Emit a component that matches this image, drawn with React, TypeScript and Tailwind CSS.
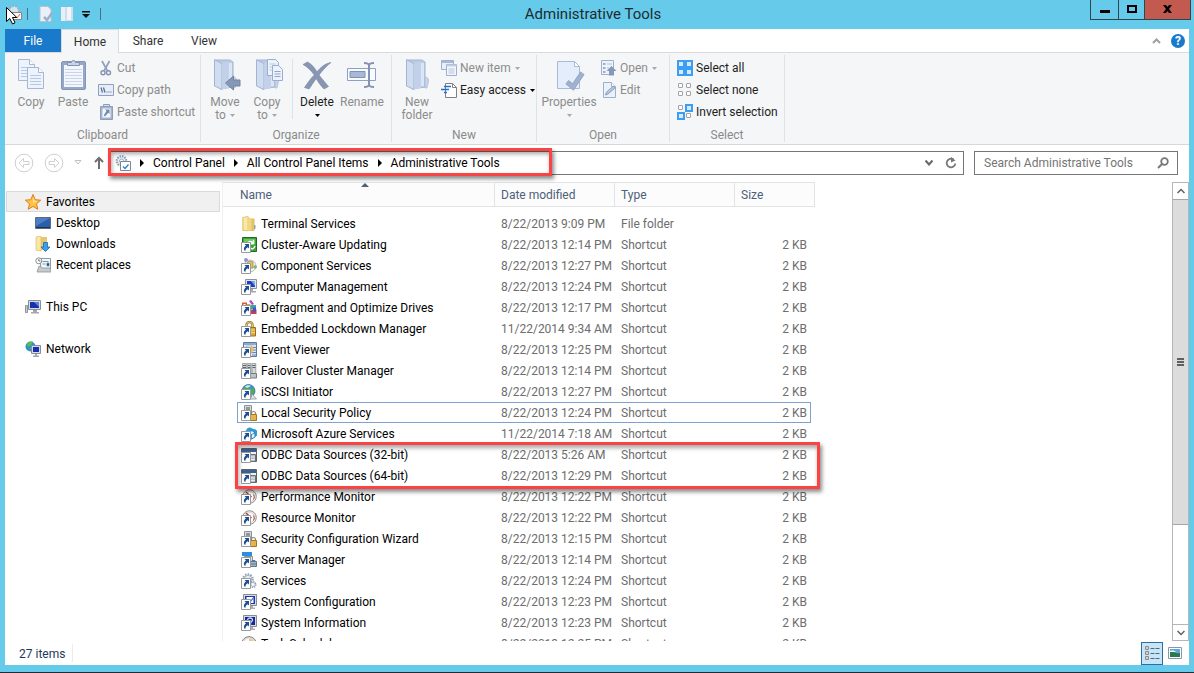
import type { ReactNode } from 'react'
import { clsx } from 'clsx'

type IconKind =
  | 'folder'
  | 'update'
  | 'component'
  | 'computer'
  | 'defrag'
  | 'lock'
  | 'event'
  | 'cluster'
  | 'globe'
  | 'policy'
  | 'azure'
  | 'odbc'
  | 'gauge'
  | 'server'
  | 'gear'
  | 'config'
  | 'info'
  | 'clock'

interface FileItem {
  name: string
  date: string
  icon: IconKind
  type?: string
  size?: string
  focused?: boolean
}

const files: FileItem[] = [
  { name: 'Terminal Services', date: '8/22/2013 9:09 PM', icon: 'folder', type: 'File folder', size: '' },
  { name: 'Cluster-Aware Updating', date: '8/22/2013 12:14 PM', icon: 'update' },
  { name: 'Component Services', date: '8/22/2013 12:27 PM', icon: 'component' },
  { name: 'Computer Management', date: '8/22/2013 12:24 PM', icon: 'computer' },
  { name: 'Defragment and Optimize Drives', date: '8/22/2013 12:17 PM', icon: 'defrag' },
  { name: 'Embedded Lockdown Manager', date: '11/22/2014 9:34 AM', icon: 'lock' },
  { name: 'Event Viewer', date: '8/22/2013 12:25 PM', icon: 'event' },
  { name: 'Failover Cluster Manager', date: '8/22/2013 12:14 PM', icon: 'cluster' },
  { name: 'iSCSI Initiator', date: '8/22/2013 12:27 PM', icon: 'globe' },
  { name: 'Local Security Policy', date: '8/22/2013 12:24 PM', icon: 'policy', focused: true },
  { name: 'Microsoft Azure Services', date: '11/22/2014 7:18 AM', icon: 'azure' },
  { name: 'ODBC Data Sources (32-bit)', date: '8/22/2013 5:26 AM', icon: 'odbc' },
  { name: 'ODBC Data Sources (64-bit)', date: '8/22/2013 12:29 PM', icon: 'odbc' },
  { name: 'Performance Monitor', date: '8/22/2013 12:22 PM', icon: 'gauge' },
  { name: 'Resource Monitor', date: '8/22/2013 12:22 PM', icon: 'gauge' },
  { name: 'Security Configuration Wizard', date: '8/22/2013 12:15 PM', icon: 'policy' },
  { name: 'Server Manager', date: '8/22/2013 12:14 PM', icon: 'server' },
  { name: 'Services', date: '8/22/2013 12:24 PM', icon: 'gear' },
  { name: 'System Configuration', date: '8/22/2013 12:23 PM', icon: 'config' },
  { name: 'System Information', date: '8/22/2013 12:23 PM', icon: 'info' },
  { name: 'Task Scheduler', date: '8/22/2013 12:25 PM', icon: 'clock' },
]

const serverTower = (
  <>
    <path d="M3.5.5h7v12h-7z" fill="#d5dadd" stroke="#8b9499" />
    <path d="M5 3h4M5 5h4" stroke="#4d565c" />
  </>
)

const padlock = (
  <>
    <path d="M10.5 10V8.5a2 2 0 0 1 4 0V10" fill="none" stroke="#8c8577" strokeWidth="1.2" />
    <path d="M9.5 9.5h6v6h-6z" fill="#e5b54a" stroke="#a8761c" />
  </>
)

const gaugeFace = (
  <>
    <circle cx="8.5" cy="7.5" r="6.8" fill="#eceae6" stroke="#8f8f8f" />
    <circle cx="8.5" cy="7.5" r="5" fill="#fff" stroke="#c9c3bb" strokeWidth=".6" />
    <path d="M12.5 5.5a4.5 4.5 0 0 1 0 5" fill="none" stroke="#b4443a" />
    <path d="m5 3 5.500 5" stroke="#b5362e" strokeWidth="1.4" />
  </>
)

const artwork: Record<IconKind, ReactNode> = {
  folder: (
    <>
      <path d="M1.500 1h6l1 1.500h5v12.500h-12z" fill="#e3c264" />
      <path d="M2 1.500 7 0v15l-5-.8z" fill="#f9e8a6" stroke="#d9b755" strokeWidth=".6" />
      <path d="M7 2h3.500v12L7 15z" fill="#f0d784" />
      <path d="M13 9h1.500v4H13z" fill="#86a9b8" />
    </>
  ),
  update: (
    <>
      <path d="M1.500.5h14v14h-14z" fill="#3da43a" stroke="#1c6d22" />
      <path d="M3 2h11v5.500L3 9z" fill="#6dc85e" />
      <path d="M6 7.500C7 4 10 3.500 11.500 5.500M12.500 3v3.500H9M14 9c-1 3-3 3.500-4.500 2" fill="none" stroke="#fff" strokeWidth="1.3" />
    </>
  ),
  component: (
    <>
      <circle cx="9" cy="8" r="6" fill="#f1f2f3" stroke="#b4bac1" />
      <circle cx="5" cy="2" r="2" fill="#8e91d6" />
      <circle cx="14.200" cy="9" r="1.800" fill="#7fb768" />
      <path d="m5 6 3-3 4 1v6H8z" fill="#e5c269" stroke="#a97f28" strokeWidth=".7" />
    </>
  ),
  computer: (
    <>
      <path d="M4.500.5h11v9h-11z" fill="#e4e7ea" stroke="#8a929a" />
      <path d="M6 2h8v6H6z" fill="#1840c9" />
      <path d="m10 2 4 0v5z" fill="#7ea4f0" />
      <path d="M9 10h3v2h3v1.500H8z" fill="#a4abb2" />
      <path d="M1.500 5.500h2v9h-2z" fill="#ccd1d5" stroke="#929a9f" />
    </>
  ),
  defrag: (
    <>
      <path d="M1 2.500h5v5H1z" fill="#e4582c" />
      <path d="M2.500 4h2v2h-2z" fill="#fff" />
      <path d="M6 4h3.500v4H6z" fill="#eda52c" />
      <path d="m8 1 2-1 3 4-2 1z" fill="#b344c7" />
      <path d="M10 5h5v4h-5z" fill="#3aa6a0" />
      <path d="M9 9.500h6.500V14H9z" fill="#c33b5e" />
      <path d="M12 7.500h3v4h-3z" fill="#4257b9" />
    </>
  ),
  lock: (
    <>
      <path d="M5.500 8V4a3 3 0 0 1 6 0v4" fill="none" stroke="#9a7a2b" strokeWidth="2.400" />
      <path d="M5.500 8V4a3 3 0 0 1 6 0v4" fill="none" stroke="#e3c878" />
      <path d="M3.500 6.500h11v8.500h-11z" fill="#dca93a" stroke="#98701a" />
      <path d="M4 9h10M4 11.500h10" stroke="#f3d684" />
    </>
  ),
  event: (
    <>
      <path d="M2.500.5h13v14h-13z" fill="#dbe5f5" stroke="#5d77a3" />
      <path d="M3 1h12v2H3z" fill="#8fa9d3" />
      <path d="M11 5.500h4M11 8h4M11 10.500h4M11 13h4" stroke="#6d86b0" />
      <path d="M5.500 4h5v7h-5z" fill="#fff" stroke="#8094b5" strokeWidth=".6" />
      <path d="m11 3 1.500 3.500L11 11 9.500 6.500z" fill="#f0c336" />
    </>
  ),
  cluster: (
    <>
      <path d="M1.500.5h3.800v11H1.500zM6.200.5H10v11H6.200zM11 .5h3.800v11H11z" fill="#d3d8da" stroke="#8b9396" strokeWidth=".8" />
      <path d="M2 2.500h3M6.800 2.500h2.700M11.500 2.500h3M2 4.500h3M6.800 4.500h2.700M11.500 4.500h3" stroke="#505a5f" strokeWidth=".9" />
      <path d="M8.500 10.500h7v4.500h-7z" fill="#bcc4c8" stroke="#727c81" />
    </>
  ),
  globe: (
    <>
      <circle cx="7.500" cy="7" r="6.500" fill="#3f8fd9" stroke="#27609e" strokeWidth=".7" />
      <path d="M2 5C4 1 8 .8 9 1.500L8 5 4 7zM9 6l4-2c1.500 3 0 6-2 7z" fill="#4eb04a" />
      <path d="M4 2.500C6 1 9 1 10 2L6 4z" fill="#c6ecf7" />
      <path d="m11 10 4.500 5h-6z" fill="#dfe4e7" stroke="#8c969c" strokeWidth=".8" />
    </>
  ),
  policy: (
    <>
      {serverTower}
      {padlock}
    </>
  ),
  azure: (
    <>
      <path d="M5 11a3.500 3.500 0 0 1 0-6.500A4 4 0 0 1 12 3a4 4 0 0 1 1 8z" fill="#2e9ddc" />
      <path d="m7 7 4-2.500L14 7v4l-3.500 2L7 11z" fill="#eaf6fd" stroke="#1b7fc1" />
      <path d="m7 7 3.500 1.500L14 7M10.500 8.500V13" fill="none" stroke="#1b7fc1" strokeWidth=".8" />
    </>
  ),
  odbc: (
    <>
      <path d="M.5 1.500h15v13H.5z" fill="#f0f1f3" stroke="#59636f" />
      <path d="M1 2h14v3H1z" fill="#3c618f" />
      <path d="M9.500 7.500h5v7h-5z" fill="#b8bec4" stroke="#666f78" />
      <path d="M10 10h4M10 12.500h4" stroke="#e9ecee" />
    </>
  ),
  gauge: gaugeFace,
  server: (
    <>
      <path d="M1 0h10v4H1z" fill="#2d8fdc" />
      <path d="M3.500 4.500h8v9h-8z" fill="#dfe4e8" stroke="#8996a1" />
      <path d="M9.500 9.500h6v5h-6z" fill="#9db7c8" stroke="#5b7a90" />
      <path d="M11 9.500v-1h3v1M10 12h5" fill="none" stroke="#5b7a90" />
    </>
  ),
  gear: (
    <>
      <circle cx="7" cy="6" r="4.600" fill="#e5eaee" stroke="#94a3af" strokeWidth="2.400" strokeDasharray="1.500 1.100" />
      <circle cx="7" cy="6" r="3.600" fill="#eaf1f5" stroke="#a4b5c1" />
      <circle cx="12" cy="11.500" r="2.700" fill="#d8e5ee" stroke="#7f95a5" strokeWidth="1.600" strokeDasharray="1.200 .9" />
      <circle cx="12" cy="11.500" r="1" fill="#fff" />
    </>
  ),
  config: (
    <>
      <path d="M2.500.5h13v11h-13z" fill="#d9dcdf" stroke="#868c92" />
      <path d="M4 2h10v8H4z" fill="#1938b5" />
      <path d="M5.500 3h7v6h-7z" fill="#fff" />
      <path d="m7 6 2 2 4-5" fill="none" stroke="#3b62cf" strokeWidth="1.200" />
      <path d="M7 12h5v1.500h2V15H7z" fill="#acb1b6" />
    </>
  ),
  info: (
    <>
      <path d="M2.500.5h13v11h-13z" fill="#d9dcdf" stroke="#868c92" />
      <path d="M4 2h10v8H4z" fill="#14279c" />
      <path d="M6.500 5C7 2 12 2.500 11.500 5.500L9.800 7.500M9.800 8.500v1" fill="none" stroke="#c9d8fb" strokeWidth="1.300" />
      <path d="M7 12h5v1.500h2V15H7z" fill="#acb1b6" />
    </>
  ),
  clock: (
    <>
      <circle cx="8" cy="8" r="7.400" fill="#d9dadb" stroke="#888" />
      <circle cx="8" cy="8" r="5.500" fill="#fafafa" />
      <path d="M8 2.500a5.500 5.500 0 0 1 5.500 5.500H8z" fill="#efc886" />
    </>
  ),
}

function FileIcon({ kind }: { kind: IconKind }) {
  return (
    <svg viewBox="0 0 16 16" className="size-4 shrink-0">
      {artwork[kind]}
      {kind !== 'folder' && kind !== 'clock' && (
        <>
          <path d="M.5 5.500h9v10h-9z" fill="#fff" stroke="#9a9a9a" />
          <path d="M3.500 7H8v4.500L6.700 10.200C5 11 4.300 12.500 4.300 14.200 2 12.500 2.800 9.800 5 8.500z" fill="#1c4f96" />
        </>
      )}
    </svg>
  )
}

const muted = '#8fa0bf'

function PageShape({ x, y }: { x: number; y: number }) {
  return (
    <g transform={`translate(${x} ${y})`}>
      <path d="M.5.5h11l5 5v16H.5z" fill="#edf3fc" stroke="#a6b6d3" />
      <path d="M11.500.5v5h5" fill="#fff" stroke="#a6b6d3" />
      <path d="M3 8.500h11M3 11.500h11M3 14.500h11M3 17.500h11" stroke="#b9c7e0" />
    </g>
  )
}

function CopyIcon() {
  return (
    <svg viewBox="0 0 32 32" className="size-8">
      <PageShape x={3} y={0} />
      <PageShape x={12} y={8} />
    </svg>
  )
}

function PasteIcon() {
  return (
    <svg viewBox="0 0 32 32" className="size-8">
      <rect x="4.500" y="2.500" width="24" height="28" rx="1.500" fill="#96a8c8" stroke="#8495b5" />
      <path d="M7 6h19v22H7z" fill="#f3f7fd" />
      <path d="M8 10.500h17M8 13.500h17M8 16.500h17M8 19.500h17M8 22.500h17M8 25.500h17" stroke="#c9d5e8" />
      <path d="M10.500 6.500v-3h4a2 2 0 0 1 4 0h4v3z" fill="#c9d3e5" stroke="#8293b3" />
    </svg>
  )
}

function FolderIcon({ children }: { children?: ReactNode }) {
  return (
    <svg viewBox="0 0 32 32" className="size-8">
      <path d="M6 1h15l3 2v25l-13 2z" fill="#bccbe4" stroke="#a3b4d2" />
      <path d="M14 4h9v23l-9 2z" fill="#dbe5f4" />
      <path d="M24 18c3 0 4 2 3.500 5L26 29h-2z" fill="#c5d2e8" stroke="#a9b9d5" strokeWidth=".6" />
      <path d="M5.500.8 13 4.500v26L5.500 27z" fill="#d0dcf0" stroke="#a3b4d2" />
      <path d="M13 4.500 20 3v26l-7 1.500z" fill="#c2d1e9" />
      {children}
    </svg>
  )
}

function MoveToIcon() {
  return (
    <FolderIcon>
      <path d="m16.500 24 8-7v4h6.500v6h-6.500v4z" fill="#8698b8" stroke="#74849f" />
    </FolderIcon>
  )
}

function CopyToIcon() {
  return (
    <FolderIcon>
      <path d="M16.500.5h8l3 3v13h-11z" fill="#edf3fc" stroke="#9cadd0" />
      <path d="M18.500 5h6M18.500 8h6M18.500 11h6" stroke="#b9c7e0" />
      <path d="M21.500 6.500h6l4 4v11h-10z" fill="#edf3fc" stroke="#9cadd0" />
      <path d="M23.500 12.500h6M23.500 15h6M23.500 17.500h6" stroke="#93a5c5" />
    </FolderIcon>
  )
}

function DeleteIcon() {
  return (
    <svg viewBox="0 0 32 32" className="size-8">
      <path
        d="M2 5.500 6.500 3c4 2 7 5.500 9.500 9.800C20 8 24 4.500 30 3.500c-4 3-8.500 8-12 12.500 4 5 7 8.500 9.500 11.500L23 30c-3-3-5.500-6.500-7.800-10.500C12 24 10 27.500 8 30l-4.500-1.500c3-4.500 6-9 9.800-12.500C10 11.500 6.500 8 2 5.500z"
        fill="#8796b3"
        stroke="#77869f"
        strokeWidth=".6"
      />
    </svg>
  )
}

function RenameIcon() {
  return (
    <svg viewBox="0 0 32 32" className="size-8">
      <path d="M1.500 9.500h28v12h-28z" fill="#f7faff" stroke="#8ea1c2" />
      <path d="M4 12.500h15v6H4z" fill="#a9b9d5" stroke="#8093b5" />
      <path d="M18 4c3 0 4.500.5 5 2 .5-1.500 2-2 5-2M23 6v20M18 28c3 0 4.500-.5 5-2 .5 1.500 2 2 5 2" fill="none" stroke="#8292b0" strokeWidth="2" />
    </svg>
  )
}

function PropertiesIcon() {
  return (
    <svg viewBox="0 0 32 32" className="size-8">
      <path d="M4.500 2.500h17l5 5v22h-22z" fill="#e3edfb" stroke="#a9bad7" />
      <path d="M21.500 2.500v5h5z" fill="#fff" stroke="#a9bad7" />
      <path d="m14 23 6 5L29.500 14" fill="none" stroke="#92a4c3" strokeWidth="5" />
      <path d="m14 23 6 5L29.500 14" fill="none" stroke="#a1b2cf" strokeWidth="3.500" />
    </svg>
  )
}

function SmallSvg({ children }: { children: ReactNode }) {
  return (
    <svg viewBox="0 0 16 16" className="size-4 shrink-0">
      {children}
    </svg>
  )
}

const cutIcon = (
  <SmallSvg>
    <path d="m4 1 5.500 10M11.500 1 6 11" fill="none" stroke={muted} strokeWidth="1.700" />
    <circle cx="5" cy="12.800" r="2" fill="none" stroke="#8292b0" strokeWidth="1.400" />
    <circle cx="10.500" cy="12.800" r="2" fill="none" stroke="#8292b0" strokeWidth="1.400" />
  </SmallSvg>
)

const copyPathIcon = (
  <SmallSvg>
    <path d="M.5 2.500h15v11H.5z" fill="#e6edf8" stroke={muted} />
    <path d="m3 5.500 1.500 5M5.500 5.500l1.500 5" stroke="#566a8e" strokeWidth="1.200" />
    <path d="M8.500 10h1M10.500 10h1M12.500 10h1" stroke="#566a8e" />
  </SmallSvg>
)

const pasteShortcutIcon = (
  <SmallSvg>
    <path d="M2.500 2.500h12v13h-12z" fill="#a5b5d0" stroke="#8c9dbd" />
    <path d="M4.500 4.500h8v9h-8z" fill="#f4f8fd" />
    <path d="M5.500 2.500v-2h6v2z" fill="#d5deec" stroke="#8c9dbd" />
    <path d="M7 5.500h4.500V10l-1.300-1.300L7 12.500 5.800 11.300 8.500 7z" fill="#7689ad" />
  </SmallSvg>
)

const newItemIcon = (
  <SmallSvg>
    <path d="M.5.500h12v9H.5z" fill="#e8eff9" stroke="#9fb0ce" />
    <path d="M1 1h11v2H1z" fill="#a7b8d4" />
    <path d="M5.500 4.500h10v11h-10z" fill="#f3f7fd" stroke="#9fb0ce" />
    <path d="M5.500 4.500h10v2h-10z" fill="#c1cee3" />
    <path d="M7.500 9h6M7.500 11h6M7.500 13h6" stroke="#b3c2dc" />
  </SmallSvg>
)

const easyAccessIcon = (
  <SmallSvg>
    <path d="M4.500 1.500h7l4 4v10h-11z" fill="#fff" stroke="#7f7f7f" />
    <path d="M11.500 1.500v4h4" fill="none" stroke="#7f7f7f" />
    <path d="M3 4.500h7M0 7.500h8M3 10.500h3" stroke="#2470c8" strokeWidth="1.300" />
  </SmallSvg>
)

const openIcon = (
  <SmallSvg>
    <path d="M.5.5h12v14H.5z" fill="#eef3fb" stroke="#9fb0ce" />
    <path d="M2 3h2.500v2H2zM2 7h2.500v2H2zM2 11h2.500v2H2z" fill="#9fb0ce" />
    <path d="M6 4h5M6 8h2" stroke="#b3c2dc" />
    <path d="m10.500 6 5 5H13v4.500H8V11H5.500z" fill="#8698b8" />
  </SmallSvg>
)

const editIcon = (
  <SmallSvg>
    <path d="M2.500.5h8l4 4v11h-12z" fill="#e9f1fc" stroke="#9fb0ce" />
    <path d="M10.500.5v4h4" fill="#fff" stroke="#9fb0ce" />
    <path d="m4.500 13 1-3 7-6 1.500 2-7 6z" fill="#b7c5dd" stroke="#7f91b2" strokeWidth=".8" />
  </SmallSvg>
)

function SelectIcon({ marks }: { marks: boolean[] }) {
  return (
    <SmallSvg>
      {marks.map((on, i) => {
        const x = (i % 2) * 8
        const y = Math.floor(i / 2) * 8
        return on ? (
          <g key={i}>
            <rect x={x} y={y} width="8" height="8" fill="#3d9df2" />
            <rect x={x + 2} y={y + 2} width="4" height="4" fill="#d4ebff" />
          </g>
        ) : (
          <rect key={i} x={x + 1.5} y={y + 1.5} width="4" height="4" rx=".5" fill="#fff" stroke="#a2a2a2" />
        )
      })}
    </SmallSvg>
  )
}

function Caret({ dark }: { dark?: boolean }) {
  return (
    <svg viewBox="0 0 5 3" className={clsx('inline-block h-[3px] w-[5px] shrink-0', dark ? 'text-black' : 'text-[#a8a8a8]')}>
      <path d="M0 0h5L2.500 3z" fill="currentColor" />
    </svg>
  )
}

interface RibbonButtonProps {
  icon: ReactNode
  label: string
  second?: string
  caret?: boolean
  active?: boolean
  className?: string
}

function BigButton({ icon, label, second, caret, active, className }: RibbonButtonProps) {
  return (
    <button
      type="button"
      className={clsx(
        'flex shrink-0 flex-col items-center pt-0.5 leading-[13px]',
        active ? 'text-[#1e1e1e]' : 'text-[#8c8c8c]',
        className,
      )}
    >
      {icon}
      <span className="mt-[5px]">{label}</span>
      {(second || caret) && (
        <span className="flex h-[13px] items-center gap-1">
          {second}
          {caret && <Caret dark={active} />}
        </span>
      )}
    </button>
  )
}

function SmallButton({ icon, label, caret, active }: RibbonButtonProps) {
  return (
    <button
      type="button"
      className={clsx('flex h-[22px] items-center whitespace-nowrap', active ? 'text-[#1e1e1e]' : 'text-[#8c8c8c]')}
    >
      {icon}
      <span className="ml-[3px] mr-1">{label}</span>
      {caret && <Caret dark={active} />}
    </button>
  )
}

function RibbonGroup({ title, className, children }: { title: string; className: string; children: ReactNode }) {
  return (
    <section className={clsx('my-0.5 flex shrink-0 flex-col border-r border-[#e0e1e3]', className)}>
      <div className="flex flex-1 items-start pt-0.5">{children}</div>
      <h2 className="h-3.5 text-center leading-3.5 text-[#8a8a8a]">{title}</h2>
    </section>
  )
}

function TitleBar() {
  return (
    <header className="flex h-[29px] shrink-0 items-start bg-[#66cbea]">
      <div className="flex h-7 w-[104px] items-center pl-[5px]">
        <svg viewBox="0 0 18 22" className="h-[22px] w-[18px]">
          <circle cx="9" cy="8" r="5" fill="#d3e5ee" stroke="#8fb4c5" strokeWidth="2" strokeDasharray="2 1" />
          <path d="M6.500 9.500h10v7h-10z" fill="#f8f8f8" stroke="#878787" />
          <path d="m10 13 2 2 3-4" fill="none" stroke="#d0674c" />
          <path d="M1.500 4.500v14l3.300-3 2.700 5.500 2.500-1.200L7.500 14.500h4.300z" fill="#fff" stroke="#000" />
        </svg>
        <span className="ml-1 h-3 w-px bg-[#4c6f7d]" />
        <svg viewBox="0 0 16 16" className="ml-2.5 size-4">
          <path d="M2 .5h8l3 3v12H2z" fill="#e9f0f7" stroke="#b5c3d3" />
          <path d="m6 11 3 3 5-7" fill="none" stroke="#9db0cb" strokeWidth="2.500" />
        </svg>
        <svg viewBox="0 0 16 16" className="ml-1.5 size-4">
          <path d="M1 1h12v14H1z" fill="#d1dce9" />
          <path d="M1 1h4v14H1z" fill="#e8eff7" />
          <path d="M7 1h4v13H7z" fill="#f1f5f9" />
        </svg>
        <svg viewBox="0 0 8 7" className="ml-1.5 h-[7px] w-2">
          <path d="M0 0h8v1.500H0zM0 3h8L4 7z" fill="#111" />
        </svg>
        <span className="ml-2.5 h-3 w-px bg-[#4c6f7d]" />
      </div>
      <h1 className="flex-1 pr-2 text-center text-[15px] leading-7 text-[#1c2b31]">Administrative Tools</h1>
      <div className="mr-[3px] flex h-5 border border-t-0 border-[#2d4650]">
        <button type="button" aria-label="Minimize" className="flex w-[27px] items-center justify-center">
          <span className="mt-1 h-[3px] w-2.5 bg-black" />
        </button>
        <button type="button" aria-label="Maximize" className="flex w-[26px] items-center justify-center border-l border-[#2d4650]">
          <span className="mb-0.5 h-2 w-2.5 border-2 border-black" />
        </button>
        <button type="button" aria-label="Close" className="flex w-[46px] items-center justify-center border-l border-[#2d4650] bg-[#c35a50]">
          <svg viewBox="0 0 9 8" className="mb-0.5 h-2 w-[9px]">
            <path d="M0 0h3l1.500 2L6 0h3L6 4l3 4H6L4.500 6 3 8H0l3-4z" />
          </svg>
        </button>
      </div>
    </header>
  )
}

function TabStrip() {
  return (
    <nav className="flex h-6 shrink-0 border-b border-[#dadbdc] text-[#333]">
      <button type="button" className="h-[23px] w-14 bg-[#1979ca] text-white">File</button>
      <button type="button" className="-mb-px w-[58px] border-x border-t border-[#dadbdc] bg-[#f5f6f7]">Home</button>
      <button type="button" className="w-[58px]">Share</button>
      <button type="button" className="w-[54px]">View</button>
      <div className="ml-auto flex items-center pr-1">
        <button type="button" aria-label="Minimize the Ribbon">
          <svg viewBox="0 0 9 6" className="h-1.5 w-[9px]">
            <path d="m1 5 3.500-3.500L8 5" fill="none" stroke="#a0a0a0" strokeWidth="2" />
          </svg>
        </button>
        <button
          type="button"
          aria-label="Help"
          className="ml-2.5 flex size-3.5 items-center justify-center rounded-full bg-[#1979ca] font-bold text-white"
        >
          ?
        </button>
      </div>
    </nav>
  )
}

function Ribbon() {
  return (
    <div className="flex h-[92px] shrink-0 overflow-hidden border-b border-[#d5d7d9] bg-[#f5f6f7]">
      <RibbonGroup title="Clipboard" className="w-[196px]">
        <BigButton icon={<CopyIcon />} label="Copy" className="ml-[5px] w-[42px]" />
        <BigButton icon={<PasteIcon />} label="Paste" className="w-[42px]" />
        <div className="ml-1">
          <SmallButton icon={cutIcon} label="Cut" />
          <SmallButton icon={copyPathIcon} label="Copy path" />
          <SmallButton icon={pasteShortcutIcon} label="Paste shortcut" />
        </div>
      </RibbonGroup>
      <RibbonGroup title="Organize" className="w-[191px]">
        <BigButton icon={<MoveToIcon />} label="Move" second="to" caret className="ml-[3px] w-[42px]" />
        <BigButton icon={<CopyToIcon />} label="Copy" second="to" caret className="w-[42px]" />
        <span className="ml-1 mt-0.5 h-[60px] w-px bg-[#e0e1e3]" />
        <BigButton icon={<DeleteIcon />} label="Delete" caret active className="ml-0.5 w-11" />
        <BigButton icon={<RenameIcon />} label="Rename" className="w-[46px]" />
      </RibbonGroup>
      <RibbonGroup title="New" className="w-[145px]">
        <BigButton icon={<FolderIcon />} label="New" second="folder" className="ml-1 w-[42px]" />
        <div className="ml-[3px]">
          <SmallButton icon={newItemIcon} label="New item" caret />
          <SmallButton icon={easyAccessIcon} label="Easy access" caret active />
        </div>
      </RibbonGroup>
      <RibbonGroup title="Open" className="w-[133px]">
        <BigButton icon={<PropertiesIcon />} label="Properties" caret className="ml-1 w-14" />
        <div className="ml-1">
          <SmallButton icon={openIcon} label="Open" caret />
          <SmallButton icon={editIcon} label="Edit" />
        </div>
      </RibbonGroup>
      <RibbonGroup title="Select" className="w-[115px]">
        <div className="ml-[7px]">
          <SmallButton icon={<SelectIcon marks={[true, true, true, true]} />} label="Select all" active />
          <SmallButton icon={<SelectIcon marks={[false, false, false, false]} />} label="Select none" active />
          <SmallButton icon={<SelectIcon marks={[false, true, true, false]} />} label="Invert selection" active />
        </div>
      </RibbonGroup>
    </div>
  )
}

function CrumbArrow() {
  return (
    <svg viewBox="0 0 4 8" className="mx-[9px] h-2 w-1 shrink-0">
      <path d="M0 0v8l4-4z" />
    </svg>
  )
}

function AddressRow() {
  return (
    <div className="flex h-[37px] shrink-0 items-center pb-0.5 pl-[9px] pr-[11px]">
      <button type="button" aria-label="Back">
        <svg viewBox="0 0 20 20" className="size-5" fill="none" stroke="#d0d0d0">
          <circle cx="10" cy="10" r="8.800" />
          <path d="m5 10 4.500-4.500V8.500H15v3H9.500v3z" />
        </svg>
      </button>
      <button type="button" aria-label="Forward" className="ml-2.5">
        <svg viewBox="0 0 20 20" className="size-5" fill="none" stroke="#d0d0d0">
          <circle cx="10" cy="10" r="8.800" />
          <path d="m15 10-4.500-4.500V8.500H5v3h5.500v3z" />
        </svg>
      </button>
      <button type="button" aria-label="Recent locations" className="ml-2.5">
        <svg viewBox="0 0 8 5" className="h-[5px] w-2">
          <path d="M1 .5h6L4 4z" fill="none" stroke="#c2c2c2" />
        </svg>
      </button>
      <button type="button" aria-label="Up" className="ml-3">
        <svg viewBox="0 0 10 13" className="h-[13px] w-2.5">
          <path d="M5 13V2M1 6l4-4 4 4" fill="none" stroke="#6e6e6e" strokeWidth="2" />
        </svg>
      </button>
      <div className="relative ml-[5px] flex h-6 flex-1 items-center border border-[#767676] pl-[5px] text-black">
        <svg viewBox="0 0 16 16" className="size-4 shrink-0">
          <circle cx="6.500" cy="6" r="4.800" fill="#e5edf3" stroke="#8fa2b3" strokeWidth="2.200" strokeDasharray="1.500 1" />
          <circle cx="6.500" cy="6" r="2" fill="#fff" stroke="#9cb0c0" />
          <path d="M5.500 6.500h10v9h-10z" fill="#fff" stroke="#7e8790" />
          <path d="m8 11.500 2 2 3.500-4" fill="none" stroke="#2b82cf" strokeWidth="1.400" />
        </svg>
        <CrumbArrow />
        <a href="#control-panel" className="whitespace-nowrap">Control Panel</a>
        <CrumbArrow />
        <a href="#all-items" className="whitespace-nowrap">All Control Panel Items</a>
        <CrumbArrow />
        <a href="#administrative-tools" className="whitespace-nowrap">Administrative Tools</a>
        <button type="button" aria-label="Previous locations" className="ml-auto">
          <svg viewBox="0 0 8 7" className="h-[7px] w-2">
            <path d="m.5 1.500 3.500 4 3.500-4" fill="none" stroke="#666" strokeWidth="2" />
          </svg>
        </button>
        <button type="button" aria-label="Refresh" className="ml-3 mr-1.5">
          <svg viewBox="0 0 12 12" className="size-3">
            <path d="M8.500 2.500A4.300 4.300 0 1 0 10.300 6.500" fill="none" stroke="#777" strokeWidth="1.800" />
            <path d="M6 0v5.500l4.500-2z" fill="#777" />
          </svg>
        </button>
        <span className="pointer-events-none absolute -left-0.5 -top-1 h-7 w-[444px] border-[3px] border-[#fa4343] shadow-[2px_3px_4px_rgba(0,0,0,0.45),inset_1px_3px_4px_rgba(0,0,0,0.35)]" />
      </div>
      <label className="ml-2.5 flex h-6 w-[204px] items-center border border-[#767676] pl-[9px] pr-2">
        <input
          type="search"
          aria-label="Search Administrative Tools"
          placeholder="Search Administrative Tools"
          className="min-w-0 flex-1 outline-none placeholder:text-[#757575]"
        />
        <svg viewBox="0 0 12 12" className="size-3 shrink-0">
          <circle cx="7.500" cy="4.500" r="3.300" fill="none" stroke="#777" strokeWidth="1.800" />
          <path d="m5 7-4 4" stroke="#777" strokeWidth="2" />
        </svg>
      </label>
    </div>
  )
}

const starIcon = (
  <SmallSvg>
    <path d="m8 .5 2.200 5.200 5.500.5-4.200 3.600 1.300 5.500L8 12.400l-4.800 2.900 1.300-5.500L.3 6.200l5.500-.5z" fill="#fdc344" stroke="#e07c22" />
    <path d="m8 3 1.300 3.700 3.500.3L8 9z" fill="#fee79b" />
  </SmallSvg>
)

const desktopIcon = (
  <SmallSvg>
    <path d="M.5 2.500h15v11H.5z" fill="#2c5fa9" stroke="#5d6a7d" />
    <path d="M1 3h14L1 11z" fill="#4b80c8" />
    <path d="M1 12.500h14" stroke="#1d3257" />
  </SmallSvg>
)

const downloadsIcon = (
  <SmallSvg>
    <path d="M1 1h11v13H1z" fill="#e8c86e" />
    <path d="M1 1 6 0v15l-5-.8z" fill="#f9e7a8" stroke="#d9b755" strokeWidth=".6" />
    <path d="M8.500 6.500h4V11h2.500l-4.500 4.500L6 11h2.500z" fill="#3aa0e8" stroke="#1668b0" strokeWidth=".8" />
  </SmallSvg>
)

const recentIcon = (
  <SmallSvg>
    <path d="M5.500 1.500h10v10h-10z" fill="#f2f6f8" stroke="#919ba2" />
    <path d="M7.500 4.500h6M7.500 7h3M12 6h2v3h-2z" stroke="#6b9fc0" />
    <path d="m4 9-2 6h14l-1-4H8z" fill="#c5cbcf" stroke="#8b9499" strokeWidth=".8" />
    <circle cx="3.800" cy="3.800" r="3" fill="#fff" stroke="#8c8c8c" />
    <path d="M3.800 2v2h1.700" fill="none" stroke="#555" strokeWidth=".8" />
  </SmallSvg>
)

const pcIcon = (
  <SmallSvg>
    <path d="M3.500 1.500h12v9h-12z" fill="#d8dce0" stroke="#868e96" />
    <path d="M5 3h9v6H5z" fill="#1930ae" />
    <path d="m9 3 5 0v5z" fill="#5a80e5" />
    <path d="M8 11h4v2h2v1.500H6V13h2z" fill="#a3a9ae" />
    <path d="M.5 6.500h2v7h-2z" fill="#c9ced2" stroke="#8d959a" />
  </SmallSvg>
)

const networkIcon = (
  <SmallSvg>
    <circle cx="5.500" cy="5.500" r="5" fill="#2f8fd1" />
    <path d="M2 3c2-3 6-2.500 6-2L6 4 3 6zM4 7l4-1v4z" fill="#5cc04c" />
    <path d="M6.500 4.500h9v8h-9z" fill="#d8dce0" stroke="#868e96" />
    <path d="M8 6h6v5H8z" fill="#162fb4" />
    <path d="M10 13h2v1.500h2V16H8v-1.500h2z" fill="#a3a9ae" />
  </SmallSvg>
)

function NavItem({ icon, label, nested, selected }: { icon: ReactNode; label: string; nested?: boolean; selected?: boolean }) {
  return (
    <a
      href={`#${label.toLowerCase().replace(' ', '-')}`}
      className={clsx(
        'ml-px mr-0.5 flex h-[21px] items-center gap-[5px] border',
        nested ? 'pl-7' : 'pl-[18px]',
        selected ? 'border-[#dadada] bg-[#f0f0f0]' : 'border-transparent',
      )}
    >
      {icon}
      {label}
    </a>
  )
}

function Sidebar() {
  return (
    <aside className="flex w-[218px] shrink-0 flex-col border-r border-[#f0f0f0] pt-[9px] text-black">
      <NavItem icon={starIcon} label="Favorites" selected />
      <NavItem icon={desktopIcon} label="Desktop" nested />
      <NavItem icon={downloadsIcon} label="Downloads" nested />
      <NavItem icon={recentIcon} label="Recent places" nested />
      <div className="h-[21px]" />
      <NavItem icon={pcIcon} label="This PC" />
      <div className="h-[21px]" />
      <NavItem icon={networkIcon} label="Network" />
    </aside>
  )
}

function FileList() {
  return (
    <main className="min-w-0 flex-1 overflow-hidden">
      <table className="w-[592px] table-fixed border-separate border-spacing-0 text-left text-[#6d6d6d]">
        <colgroup>
          <col className="w-[272px]" />
          <col className="w-[120px]" />
          <col className="w-[120px]" />
          <col className="w-20" />
        </colgroup>
        <thead className="text-[#4c607a]">
          <tr className="h-[25px] bg-[#fcfcfc]">
            <th className="relative border-y border-r border-[#e2e3e4] p-0 pl-[17px] font-normal">
              Name
              <svg viewBox="0 0 8 4" className="absolute left-1/2 top-0 ml-0.5 h-1 w-2">
                <path d="M0 4h8L4 0z" fill="#4c607a" />
              </svg>
            </th>
            <th className="border-y border-r border-[#e2e3e4] p-0 pl-1.5 font-normal">Date modified</th>
            <th className="border-y border-r border-[#e2e3e4] p-0 pl-1.5 font-normal">Type</th>
            <th className="border-y border-r border-[#e2e3e4] p-0 pl-1.5 font-normal">Size</th>
          </tr>
          <tr className="h-1.5" />
        </thead>
        <tbody>
          {files.map((file, i) => (
            <tr key={file.name} className="relative h-[21px] whitespace-nowrap">
              <td className="p-0 pl-[18px] text-black">
                <span className="flex items-center gap-1">
                  <FileIcon kind={file.icon} />
                  {file.name}
                </span>
                {file.focused && (
                  <span className="pointer-events-none absolute inset-y-0 left-3.5 right-1 border border-[#7da2ce]" />
                )}
                {/* callout around both ODBC entries */}
                {i === 11 && (
                  <span className="pointer-events-none absolute -right-[5px] -top-0.5 left-3 z-10 h-[47px] border-[3px] border-[#fa4343] shadow-[2px_3px_4px_rgba(0,0,0,0.45),inset_1px_3px_4px_rgba(0,0,0,0.35)]" />
                )}
              </td>
              <td className="p-0 pl-1.5">{file.date}</td>
              <td className="p-0 pl-1.5">{file.type ?? 'Shortcut'}</td>
              <td className="p-0 pr-2 text-right">{file.size ?? '2 KB'}</td>
            </tr>
          ))}
        </tbody>
      </table>
    </main>
  )
}

function ScrollBar() {
  return (
    <div className="flex w-[17px] shrink-0 flex-col border border-[#b5b5b5] bg-white">
      <button type="button" aria-label="Scroll up" className="flex h-4 shrink-0 items-center justify-center">
        <svg viewBox="0 0 8 6" className="h-1.5 w-2">
          <path d="m.5 5L4 1.500 7.500 5" fill="none" stroke="#606060" strokeWidth="1.500" />
        </svg>
      </button>
      <div className="flex basis-0 grow-[326] flex-col items-center justify-center gap-px border-y border-[#a6a6a6] bg-[#dcdcdc]">
        <span className="h-0.5 w-[7px] bg-[#606060]" />
        <span className="h-0.5 w-[7px] bg-[#606060]" />
        <span className="h-0.5 w-[7px] bg-[#606060]" />
      </div>
      <div className="basis-0 grow-[100]" />
      <button type="button" aria-label="Scroll down" className="flex h-4 shrink-0 items-center justify-center border-t border-[#b5b5b5]">
        <svg viewBox="0 0 8 6" className="h-1.5 w-2">
          <path d="M.5 1 4 4.500 7.500 1" fill="none" stroke="#606060" strokeWidth="1.500" />
        </svg>
      </button>
    </div>
  )
}

function StatusBar() {
  return (
    <footer className="flex h-6 shrink-0 items-center pl-3.5 text-[#1e395b]">
      <span className="w-[54px] border-r border-[#ececec] pt-0.5">27 items</span>
      <div className="ml-auto flex items-center pr-[7px]">
        <button type="button" aria-label="Details view" className="flex h-[23px] w-[22px] items-center justify-center border border-[#2f6da8] bg-[#c6e5f7]">
          <svg viewBox="0 0 16 14" className="h-3.5 w-4">
            <path d="M1.500.5h3v3h-3zM1.500 5.500h3v3h-3zM1.500 10.500h3v3h-3z" fill="#fff" stroke="#8a8a8a" />
            <path d="M2.500 2h1M2.500 7h1M2.500 12h1" stroke="#a33" />
            <path d="M6.500 2.500h4M11.500 2.500h4M6.500 7.500h4M11.500 7.500h4M6.500 12.500h4M11.500 12.500h4" stroke="#52687d" />
          </svg>
        </button>
        <button type="button" aria-label="Large thumbnails" className="ml-[5px]">
          <svg viewBox="0 0 14 12" className="h-3 w-3.5">
            <path d="M.5.5h13v11H.5z" fill="#fff" stroke="#8a98a5" />
            <path d="M2 2h10v8H2z" fill="#5ca8e0" />
            <path d="M2 5c4-1 6 2 10 1v4H2z" fill="#2c7a4c" />
            <path d="M2 4c3-1 5 0 6 1H2z" fill="#fff" />
          </svg>
        </button>
      </div>
    </footer>
  )
}

export default function App() {
  return (
    <div className="flex h-dvh flex-col overflow-hidden border-b border-[#222b33] bg-[#66cbea] font-[Roboto,'Open_Sans',sans-serif] text-[12px] leading-4">
      <TitleBar />
      <div className="mx-[5px] mb-[7px] flex min-h-0 flex-1 flex-col bg-white">
        <TabStrip />
        <Ribbon />
        <AddressRow />
        <div className="flex min-h-0 flex-1">
          <Sidebar />
          <FileList />
          <ScrollBar />
        </div>
        <StatusBar />
      </div>
    </div>
  )
}
